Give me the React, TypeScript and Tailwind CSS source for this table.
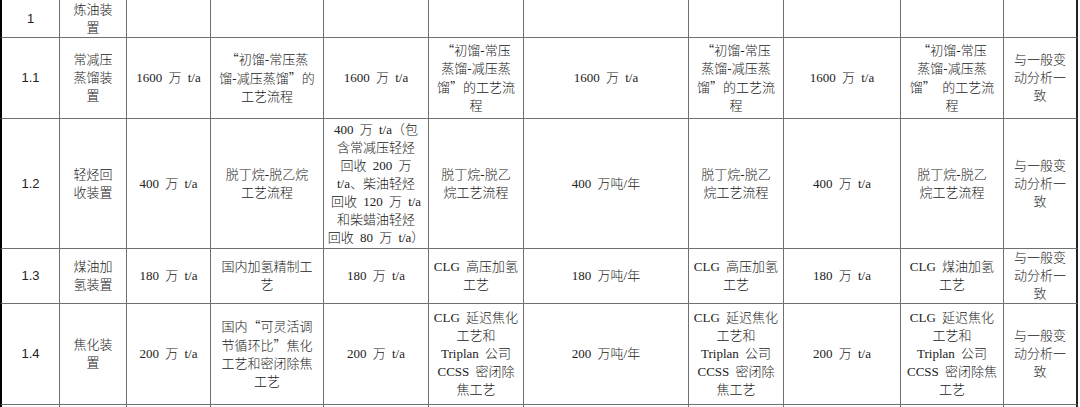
import clsx from 'clsx';

type CellValue = string | string[];

const rows: { height: string; cells: CellValue[] }[] = [
  {
    height: 'h-[38px]',
    cells: ['1', ['炼油装', '置'], '', '', '', '', '', '', '', '', ''],
  },
  {
    height: 'h-[81px]',
    cells: [
      '1.1',
      ['常减压', '蒸馏装', '置'],
      '1600 万 t/a',
      ['“初馏-常压蒸', '馏-减压蒸馏”的', '工艺流程'],
      '1600 万 t/a',
      ['“初馏-常压', '蒸馏-减压蒸', '馏”的工艺流', '程'],
      '1600 万 t/a',
      ['“初馏-常压', '蒸馏-减压蒸', '馏”的工艺流', '程'],
      '1600 万 t/a',
      ['“初馏-常压', '蒸馏-减压蒸', '馏” 的工艺流', '程'],
      ['与一般变', '动分析一', '致'],
    ],
  },
  {
    height: 'h-[130px]',
    cells: [
      '1.2',
      ['轻烃回', '收装置'],
      '400 万 t/a',
      ['脱丁烷-脱乙烷', '工艺流程'],
      [
        '400 万 t/a（包',
        '含常减压轻烃',
        '回收 200 万',
        't/a、柴油轻烃',
        '回收 120 万 t/a',
        '和柴蜡油轻烃',
        '回收 80 万 t/a）',
      ],
      ['脱丁烷-脱乙', '烷工艺流程'],
      '400 万吨/年',
      ['脱丁烷-脱乙', '烷工艺流程'],
      '400 万 t/a',
      ['脱丁烷-脱乙', '烷工艺流程'],
      ['与一般变', '动分析一', '致'],
    ],
  },
  {
    height: 'h-[55px]',
    cells: [
      '1.3',
      ['煤油加', '氢装置'],
      '180 万 t/a',
      ['国内加氢精制工', '艺'],
      '180 万 t/a',
      ['CLG 高压加氢', '工艺'],
      '180 万吨/年',
      ['CLG 高压加氢', '工艺'],
      '180 万 t/a',
      ['CLG 煤油加氢', '工艺'],
      ['与一般变', '动分析一', '致'],
    ],
  },
  {
    height: 'h-[101px]',
    cells: [
      '1.4',
      ['焦化装', '置'],
      '200 万 t/a',
      ['国内“可灵活调', '节循环比”焦化', '工艺和密闭除焦', '工艺'],
      '200 万 t/a',
      ['CLG 延迟焦化', '工艺和', 'Triplan 公司', 'CCSS 密闭除', '焦工艺'],
      '200 万吨/年',
      ['CLG 延迟焦化', '工艺和', 'Triplan 公司', 'CCSS 密闭除', '焦工艺'],
      '200 万 t/a',
      ['CLG 延迟焦化', '工艺和', 'Triplan 公司', 'CCSS 密闭除焦', '工艺'],
      ['与一般变', '动分析一', '致'],
    ],
  },
  {
    height: 'h-[20px]',
    cells: ['', '', '', '', '', '', '', '', '', '', ''],
  },
];

// full-width quotes come from the CJK font, as in the source document
function Line({ text }: { text: string }) {
  const parts = text.split(/([“”])/);
  return (
    <span>
      {parts.map((part, i) =>
        part === '“' || part === '”' ? (
          <span key={i} className="font-['Noto_Sans_CJK_SC',sans-serif]">
            {part}
          </span>
        ) : (
          part
        )
      )}
    </span>
  );
}

function Cell({ value, index, height }: { value: CellValue; index: number; height: string }) {
  const lines = Array.isArray(value) ? value : value ? [value] : [];
  const isFirst = index === 0;
  const isLast = index === 10;
  return (
    <div
      className={clsx(
        'flex flex-col items-center justify-center border-b border-[#707070] text-center text-[13px] leading-[18px] whitespace-nowrap',
        height,
        isFirst
          ? "border-l-2 border-r border-l-black font-['Liberation_Sans',sans-serif] text-[#222]"
          : "font-['Liberation_Serif','Noto_Sans_CJK_SC',serif] font-light text-[#222] [word-spacing:3px]",
        isLast ? 'border-r-2 border-r-[#222]' : 'border-r'
      )}
    >
      {lines.map((line, i) => (
        <Line key={i} text={line} />
      ))}
    </div>
  );
}

export default function App() {
  return (
    <div className="h-[407px] w-[1080px] overflow-hidden bg-white">
      <div className="grid w-[1078px] grid-cols-[60px_67px_84px_113px_105px_95px_165px_95px_117px_103px_74px]">
        {rows.map((row, r) =>
          row.cells.map((value, c) => (
            <Cell key={`${r}-${c}`} value={value} index={c} height={row.height} />
          ))
        )}
      </div>
    </div>
  );
}
